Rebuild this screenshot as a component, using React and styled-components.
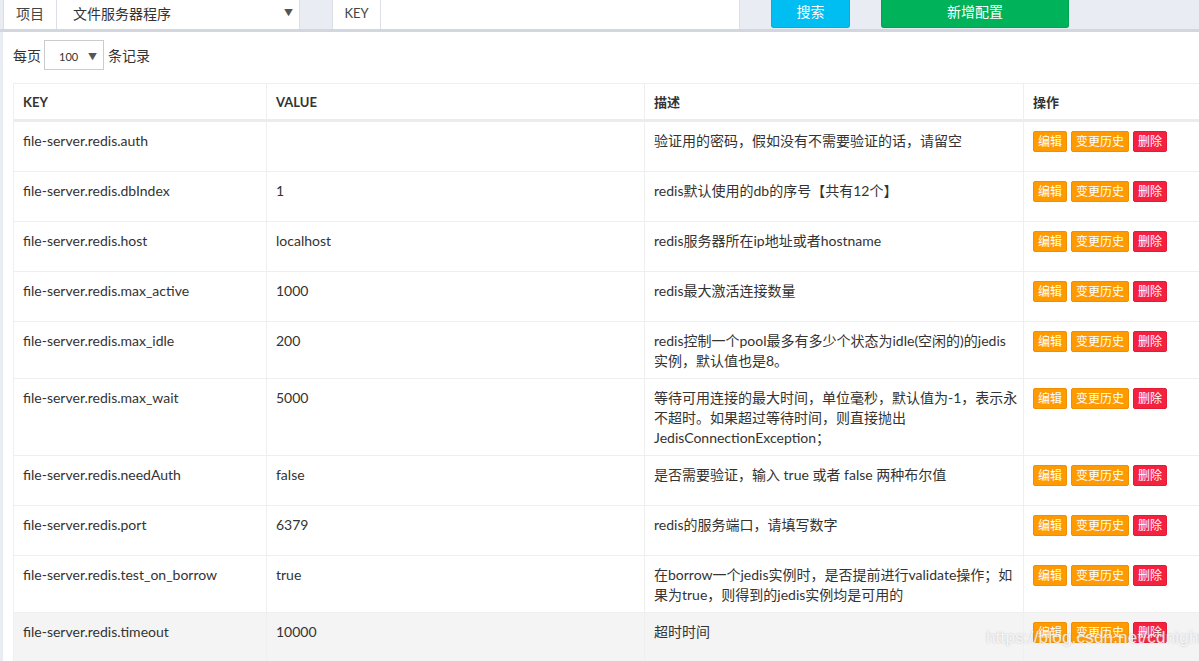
import styled, { createGlobalStyle } from "styled-components";

const GlobalStyle = createGlobalStyle`
  html, body {
    margin: 0;
    padding: 0;
    background: #e9ecf3;
    font-family: Lato, "Noto Sans CJK SC", sans-serif;
    color: #333;
    overflow: hidden;
  }
`;

const Page = styled.div`
  width: 1199px;
  height: 661px;
  position: relative;
  overflow: hidden;
`;

const TopBar = styled.div`
  display: flex;
  align-items: stretch;
  height: 29px;
  padding-left: 3px;
  border-bottom: 3px solid #d2d6de;
  background: #e9ecf3;
`;

const Cell = styled.div`
  display: flex;
  align-items: center;
  box-sizing: border-box;
  width: ${(p) => p.$w}px;
  margin-left: ${(p) => p.$ml || 0}px;
  padding-bottom: 4px;
  background: #fff;
  border-left: 1px solid #dcdfe6;
  border-right: 1px solid #dcdfe6;
  font-size: ${(p) => p.$fs || 14}px;
  color: #444;
  justify-content: ${(p) => (p.$center ? "center" : "flex-start")};
  padding-left: ${(p) => p.$pl || 0}px;
`;

const SelectCell = styled(Cell)`
  justify-content: space-between;
  padding-right: 6px;
  border-left: none;
  color: #333;
`;

const InputCell = styled(Cell)`
  border-left: none;
`;

const Caret = styled.span`
  font-size: ${(p) => p.$fs || 9}px;
  color: #555;
`;

const TopButton = styled.button`
  box-sizing: border-box;
  width: ${(p) => p.$w}px;
  margin-left: ${(p) => p.$ml}px;
  height: 28px;
  border: 1px solid ${(p) => p.$border};
  border-top: none;
  border-radius: 0 0 3px 3px;
  background: ${(p) => p.$bg};
  color: #fff;
  font-family: inherit;
  font-size: 14px;
  padding: 0 0 5px;
`;

const Panel = styled.div`
  margin-left: 3px;
  background: #fff;
  padding: 8px 0 0 10px;
  height: 640px;
`;

const PageSize = styled.div`
  display: flex;
  align-items: center;
  font-size: 14px;
  color: #333;
  height: 30px;
`;

const SizeSelect = styled.div`
  display: flex;
  align-items: center;
  justify-content: space-between;
  box-sizing: border-box;
  width: 60px;
  height: 30px;
  margin: 0 4px 0 3px;
  padding: 3px 6px 0 14px;
  border: 1px solid #ccc;
  font-size: 11px;
  color: #333;
`;

const Table = styled.table`
  margin-top: 13px;
  width: 1215px;
  table-layout: fixed;
  border-collapse: separate;
  border-spacing: 0;
  border-left: 1px solid #efefef;
  font-size: 14px;
`;

const Th = styled.th`
  box-sizing: border-box;
  width: ${(p) => (p.$w ? `${p.$w}px` : "auto")};
  text-align: left;
  font-weight: 700;
  font-size: 13px;
  color: #333;
  line-height: 20px;
  padding: 8px 9px 7px;
  border-top: 1px solid #efefef;
  border-right: 1px solid #efefef;
  border-bottom: 3px solid #ececec;
`;

const Row = styled.tr`
  height: 50px;
  background: ${(p) => (p.$hover ? "#f4f4f4" : "#fff")};
`;

const Td = styled.td`
  vertical-align: top;
  line-height: 20px;
  padding: 9px 4px 7px 9px;
  color: #333;
  border-right: 1px solid #efefef;
  border-bottom: 1px solid #efefef;
`;

const Actions = styled.div`
  display: flex;
  gap: 4px;
`;

const ActionButton = styled.span`
  display: inline-flex;
  align-items: center;
  justify-content: center;
  height: 21px;
  padding: 0 4px;
  border-radius: 2px;
  background: ${(p) => (p.$danger ? "#f5223f" : "#ff9a00")};
  border: 1px solid ${(p) => (p.$danger ? "#e51b36" : "#f08f00")};
  box-sizing: border-box;
  color: #fff;
  font-size: 12px;
  line-height: 1;
`;

const Watermark = styled.div`
  position: absolute;
  left: 986px;
  top: 628px;
  font-family: "Liberation Sans", Arial, sans-serif;
  font-size: 17px;
  color: rgba(255, 255, 255, 0.8);
  text-shadow: 0 0 2px rgba(150, 150, 150, 0.6);
  letter-spacing: 0.2px;
  pointer-events: none;
`;

const rows = [
  ["file-server.redis.auth", "", "验证用的密码，假如没有不需要验证的话，请留空"],
  ["file-server.redis.dbIndex", "1", "redis默认使用的db的序号【共有12个】"],
  ["file-server.redis.host", "localhost", "redis服务器所在ip地址或者hostname"],
  ["file-server.redis.max_active", "1000", "redis最大激活连接数量"],
  [
    "file-server.redis.max_idle",
    "200",
    "redis控制一个pool最多有多少个状态为idle(空闲的)的jedis实例，默认值也是8。",
  ],
  [
    "file-server.redis.max_wait",
    "5000",
    "等待可用连接的最大时间，单位毫秒，默认值为-1，表示永不超时。如果超过等待时间，则直接抛出JedisConnectionException；",
  ],
  ["file-server.redis.needAuth", "false", "是否需要验证，输入 true 或者 false 两种布尔值"],
  ["file-server.redis.port", "6379", "redis的服务端口，请填写数字"],
  [
    "file-server.redis.test_on_borrow",
    "true",
    "在borrow一个jedis实例时，是否提前进行validate操作；如果为true，则得到的jedis实例均是可用的",
  ],
  ["file-server.redis.timeout", "10000", "超时时间"],
];

export default function App() {
  return (
    <Page>
      <GlobalStyle />
      <TopBar>
        <Cell $w={54} $center>
          项目
        </Cell>
        <SelectCell $w={243} $pl={16}>
          文件服务器程序
          <Caret>▼</Caret>
        </SelectCell>
        <Cell $w={49} $ml={32} $fs={13} $center>
          KEY
        </Cell>
        <InputCell $w={359} />
        <TopButton $w={79} $ml={31} $bg="#00bdf2" $border="#00aee0">
          搜索
        </TopButton>
        <TopButton $w={188} $ml={31} $bg="#00b25a" $border="#00a350">
          新增配置
        </TopButton>
      </TopBar>
      <Panel>
        <PageSize>
          每页
          <SizeSelect>
            100
            <Caret>▼</Caret>
          </SizeSelect>
          条记录
        </PageSize>
        <Table>
          <thead>
            <tr>
              <Th $w={253}>KEY</Th>
              <Th $w={378}>VALUE</Th>
              <Th $w={379}>描述</Th>
              <Th>操作</Th>
            </tr>
          </thead>
          <tbody>
            {rows.map(([k, v, d], i) => (
              <Row key={k} $hover={i === rows.length - 1}>
                <Td>{k}</Td>
                <Td>{v}</Td>
                <Td>{d}</Td>
                <Td>
                  <Actions>
                    <ActionButton>编辑</ActionButton>
                    <ActionButton>变更历史</ActionButton>
                    <ActionButton $danger>删除</ActionButton>
                  </Actions>
                </Td>
              </Row>
            ))}
          </tbody>
        </Table>
      </Panel>
      <Watermark>https://blog.csdn.net/cdnight</Watermark>
    </Page>
  );
}
